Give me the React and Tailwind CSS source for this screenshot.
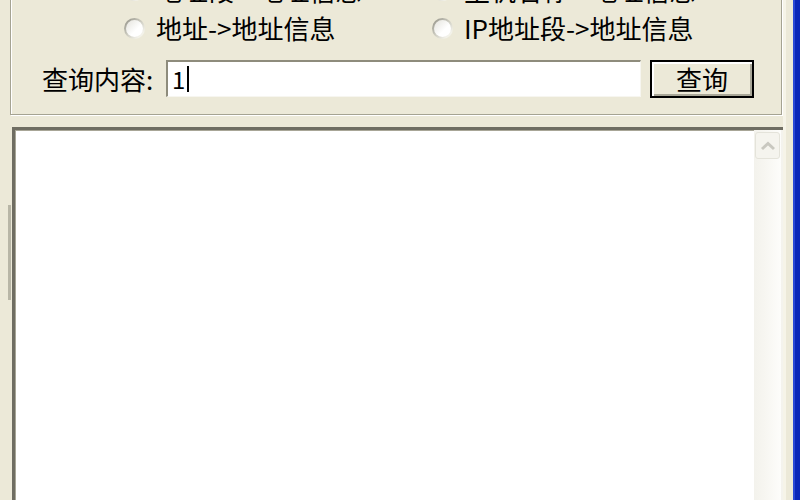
import React from "react";

const font = { fontFamily: '"Noto Sans CJK SC", "Noto Sans", sans-serif' };

function Radio() {
  return (
    <div className="relative h-[21px] w-[21px] shrink-0 rounded-full bg-[linear-gradient(135deg,#8d8c82_0%,#c9c8bd_45%,#f3f2ea_80%)] p-[2px]">
      <div className="h-full w-full rounded-full bg-[linear-gradient(135deg,#e4e3dc_0%,#ffffff_60%)]" />
    </div>
  );
}

function RadioItem({ label }) {
  return (
    <div className="flex h-[34px] items-center gap-[11px]">
      <Radio />
      <span className="text-[26px] leading-[34px] text-black whitespace-nowrap">{label}</span>
    </div>
  );
}

export default function App() {
  return (
    <div
      className="flex h-[500px] w-[800px] overflow-hidden bg-[#ECE9D8] text-black"
      style={font}
    >
      {/* main area */}
      <div className="flex w-[783px] shrink-0 flex-col">
        {/* group box */}
        <div className="ml-[10px] -mt-[40px] h-[155px] w-[772px] shrink-0 border border-[#a5a392] shadow-[1px_1px_0_#ffffff,inset_1px_1px_0_#ffffff]">
          <div className="grid grid-cols-[308px_1fr] gap-y-[4px] pl-[113px] pt-[12px]">
            <RadioItem label="地址段->地址信息" />
            <RadioItem label="主机名称->地址信息" />
            <RadioItem label="地址->地址信息" />
            <RadioItem label="IP地址段->地址信息" />
          </div>
          <div className="mt-[14px] flex h-[39px] items-center pl-[31px]">
            <span className="w-[124px] shrink-0 text-[26px] leading-none whitespace-nowrap">
              查询内容:
            </span>
            <div className="flex h-[37px] w-[475px] items-center border-l-2 border-t-2 border-[#8e8c7c] border-b border-r border-b-[#f7f6f0] border-r-[#f7f6f0] bg-white pl-[4px]">
              <span className="text-[24px] leading-none">1</span>
              <span className="ml-[2px] h-[26px] w-[2px] bg-black" />
            </div>
            <button className="ml-[9px] flex h-[38px] w-[104px] items-center justify-center border-2 border-black bg-[#ECE9D8] shadow-[inset_2px_2px_0_#ffffff,inset_-2px_-2px_0_#a9a798] text-[26px] leading-none">
              查询
            </button>
          </div>
        </div>

        {/* content row */}
        <div className="mt-[12px] flex flex-1">
          {/* left margin with splitter grip */}
          <div className="flex w-[12px] shrink-0 flex-col">
            <div className="h-[78px]" />
            <div className="ml-[8px] h-[95px] w-[3px] bg-[#b8b6a6]" />
          </div>
          {/* text area */}
          <div className="flex h-[420px] flex-1 border-l-[3px] border-t-[3px] border-l-[#6f6d62] border-t-[#6f6d62] bg-white">
            <div className="flex-1 border-l border-t border-[#a8a697]" />
            <div className="flex w-[27px] shrink-0 flex-col bg-[linear-gradient(90deg,#f3f2ec_0%,#f7f6f1_40%,#fdfdfb_100%)]">
              <div className="mx-[1px] mt-[2px] flex h-[27px] items-center justify-center rounded-[3px] border border-[#e4e3da] bg-[#f5f4ee]">
                <svg width="16" height="10" viewBox="0 0 16 10">
                  <path d="M2 8 L8 2.5 L14 8" fill="none" stroke="#c9c8c0" strokeWidth="3" />
                </svg>
              </div>
            </div>
            <div className="w-[2px] bg-[#f4f3ed]" />
          </div>
        </div>
      </div>

      {/* right window frame */}
      <div className="flex flex-1">
        <div className="w-[3px] bg-[#f6f4e8]" />
        <div className="w-[7px] bg-[#ECE9D8]" />
        <div className="w-[2px] bg-[#2a49d6]" />
        <div className="flex-1 bg-[#0a27b8]" />
      </div>
    </div>
  );
}
